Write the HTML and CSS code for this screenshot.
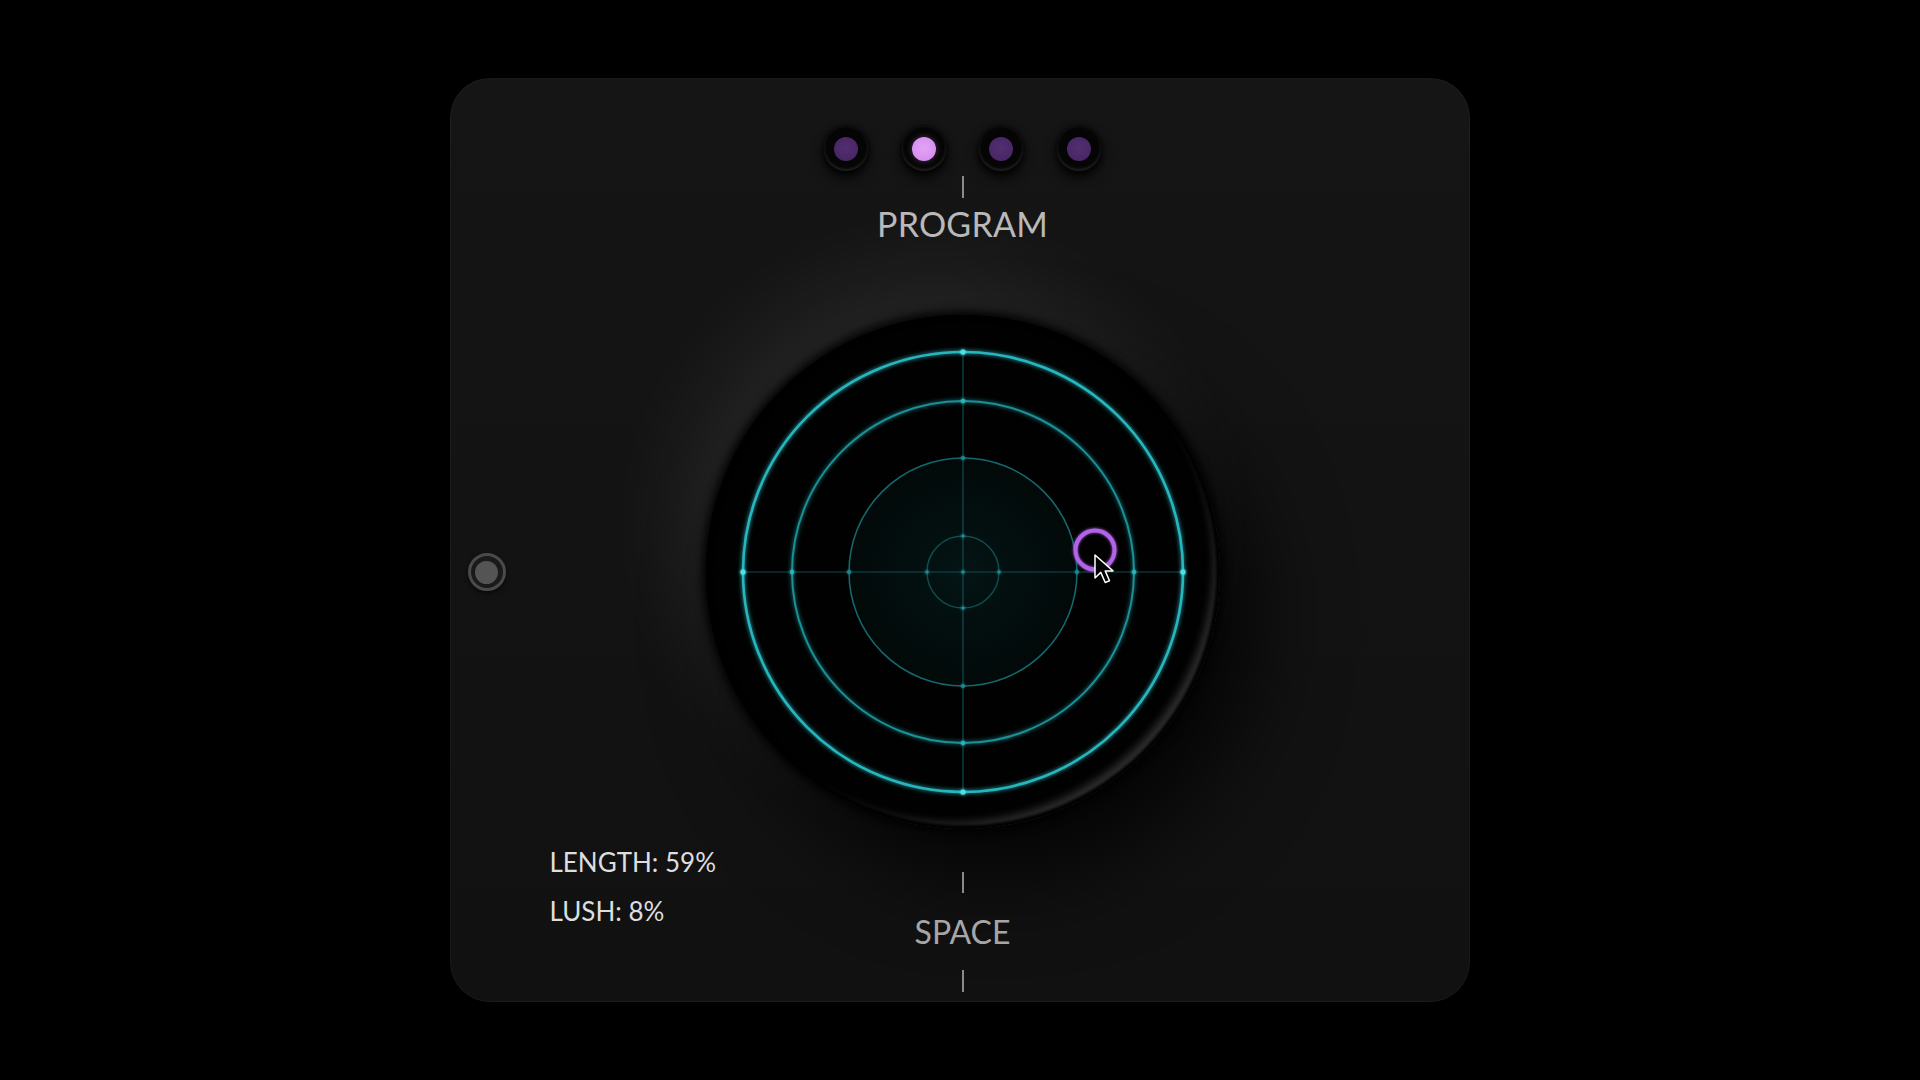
FILE: index.html
```html
<!DOCTYPE html>
<html lang="en">
<head>
<meta charset="utf-8">
<title>Space Reverb</title>
<link rel="stylesheet" href="styles.css">
</head>
<body>
<div class="panel">
  <div class="program">
    <div class="dots">
      <div class="socket"><div class="led"></div></div>
      <div class="socket"><div class="led led-on"></div></div>
      <div class="socket"><div class="led"></div></div>
      <div class="socket"><div class="led"></div></div>
    </div>
    <div class="tick"></div>
    <div class="label label-program">PROGRAM</div>
  </div>

  <div class="knob-row">
    <div class="bypass"><div class="bypass-core"></div></div>
    <div class="knob">
      <svg class="radar" viewBox="0 0 500 500" width="500" height="500">
        <defs>
          <radialGradient id="core" cx="50%" cy="50%" r="50%">
            <stop offset="0" class="core-a"/>
            <stop offset="1" class="core-b"/>
          </radialGradient>
          <filter id="glow" x="-20%" y="-20%" width="140%" height="140%">
            <feGaussianBlur stdDeviation="2.2" result="b"/>
            <feMerge><feMergeNode in="b"/><feMergeNode in="SourceGraphic"/></feMerge>
          </filter>
          <filter id="soft" x="-50%" y="-50%" width="200%" height="200%">
            <feGaussianBlur stdDeviation="1.5" result="b"/>
            <feMerge><feMergeNode in="b"/><feMergeNode in="SourceGraphic"/></feMerge>
          </filter>
        </defs>
        <circle class="core" cx="250" cy="250" r="114"/>
        <line class="cross" x1="30" y1="250" x2="470" y2="250"/>
        <line class="cross" x1="250" y1="30" x2="250" y2="470"/>
        <circle class="ring ring-4" cx="250" cy="250" r="36"/>
        <circle class="ring ring-3" cx="250" cy="250" r="114"/>
        <circle class="ring ring-2" cx="250" cy="250" r="171"/>
        <circle class="ring ring-1" cx="250" cy="250" r="220"/>
        <g class="nodes nodes-1">
          <circle cx="250" cy="30" r="2.6"/><circle cx="250" cy="470" r="2.6"/>
          <circle cx="30" cy="250" r="2.6"/><circle cx="470" cy="250" r="2.6"/>
        </g>
        <g class="nodes nodes-2">
          <circle cx="250" cy="79" r="2.2"/><circle cx="250" cy="421" r="2.2"/>
          <circle cx="79" cy="250" r="2.2"/><circle cx="421" cy="250" r="2.2"/>
        </g>
        <g class="nodes nodes-3">
          <circle cx="250" cy="136" r="2"/><circle cx="250" cy="364" r="2"/>
          <circle cx="136" cy="250" r="2"/><circle cx="364" cy="250" r="2"/>
          <circle cx="250" cy="214" r="1.8"/><circle cx="250" cy="286" r="1.8"/>
          <circle cx="214" cy="250" r="1.8"/><circle cx="286" cy="250" r="1.8"/>
          <circle cx="250" cy="250" r="1.8"/>
        </g>
        <circle class="handle" cx="382" cy="228" r="19.5"/>
        <path class="cursor" d="M382 233 L382 256 L387.8 250.4 L392.2 260.5 L396.5 258.8 L392.2 248.9 L400 248.9 Z"/>
      </svg>
    </div>
    <div class="spacer"></div>
  </div>

  <div class="bottom-row">
    <div class="readouts">
      <div class="readout">LENGTH: 59%</div>
      <div class="readout">LUSH: 8%</div>
    </div>
    <div class="space">
      <div class="tick tick-space"></div>
      <div class="label label-space">SPACE</div>
      <div class="tick tick-end"></div>
    </div>
    <div class="spacer"></div>
  </div>
</div>
</body>
</html>
```

FILE: styles.css
```css
html, body {
  margin: 0;
  padding: 0;
  background: #000;
}

body {
  width: 1920px;
  height: 1080px;
  display: flex;
  align-items: center;
  justify-content: center;
  font-family: "Lato", "Noto Sans", sans-serif;
}

.panel {
  box-sizing: border-box;
  width: 1020px;
  height: 924px;
  margin-left: -1px;
  border-radius: 40px;
  border: 1px solid rgba(255, 255, 255, 0.035);
  background: linear-gradient(180deg, #151515 0%, #131313 50%, #111111 100%);
  padding: 48px 0 0 6px;
  display: flex;
  flex-direction: column;
  overflow: hidden;
}

/* ---------- program selector ---------- */
.program {
  display: flex;
  flex-direction: column;
  align-items: center;
}

.dots {
  display: flex;
  gap: 33.5px;
  height: 44px;
}

.socket {
  width: 44px;
  height: 44px;
  border-radius: 50%;
  background: radial-gradient(circle at 50% 45%, #030303 0%, #050505 60%, #0b0b0b 100%);
  box-shadow:
    0 6px 12px rgba(0, 0, 0, 0.9),
    0 0 4px 1px rgba(0, 0, 0, 0.8),
    inset 0 -2px 3px rgba(255, 255, 255, 0.1),
    0 0 0 1px rgba(255, 255, 255, 0.045);
  display: flex;
  align-items: center;
  justify-content: center;
}

.led {
  width: 24px;
  height: 24px;
  border-radius: 50%;
  background: radial-gradient(circle at 50% 45%, #52306f 0%, #492766 70%, #3e2058 100%);
}

.led-on {
  background: radial-gradient(circle at 50% 45%, #e3a3f6 0%, #d690ee 70%, #c97fe2 100%);
  box-shadow: 0 0 6px rgba(214, 144, 238, 0.35);
}

.tick {
  width: 2px;
  height: 22px;
  background: #8a8a8a;
  margin-top: 5px;
}

.label {
  line-height: 1;
  color: #b9b9b9;
}

.label-program {
  font-size: 34px;
  margin-top: 9px;
  letter-spacing: 0.2px;
}

/* ---------- knob ---------- */
.knob-row {
  display: grid;
  grid-template-columns: minmax(0, 1fr) 514px minmax(0, 1fr);
  align-items: center;
  margin-top: 74px;
}

.bypass {
  justify-self: start;
  margin-left: 11px;
  box-sizing: border-box;
  width: 38px;
  height: 38px;
  border-radius: 50%;
  border: 3px solid #4a4a4a;
  background: #1a1a1a;
  display: flex;
  align-items: center;
  justify-content: center;
  box-shadow: 0 2px 4px rgba(0, 0, 0, 0.6);
}

.bypass-core {
  width: 23px;
  height: 23px;
  border-radius: 50%;
  background: #545454;
}

.knob {
  width: 514px;
  height: 514px;
  border-radius: 50%;
  background: #010101;
  display: flex;
  align-items: center;
  justify-content: center;
  box-shadow:
    inset 0 0 3px 4px #010101,
    inset -11px -11px 10px -5px rgba(255, 255, 255, 0.2),
    0 0 8px 4px rgba(0, 0, 0, 0.9),
    -30px -45px 90px rgba(255, 255, 255, 0.075),
    35px 45px 90px rgba(0, 0, 0, 0.8);
}

.radar {
  display: block;
}

.core-a { stop-color: #041414; }
.core-b { stop-color: #020909; }

.core { fill: url(#core); }

.cross {
  stroke: #0d4f52;
  stroke-width: 1.2;
}

.ring { fill: none; }
.ring-1 { stroke: #28b6be; stroke-width: 2.6; filter: url(#glow); }
.ring-2 { stroke: #1a9097; stroke-width: 2; filter: url(#glow); }
.ring-3 { stroke: #14676c; stroke-width: 1.6; }
.ring-4 { stroke: #0f4d50; stroke-width: 1.5; }

.nodes circle { filter: url(#soft); }
.nodes-1 { fill: #4fe0e6; }
.nodes-2 { fill: #2cb2b8; }
.nodes-3 { fill: #1f8a8f; }

.handle {
  fill: none;
  stroke: #b264e8;
  stroke-width: 4;
  filter: url(#soft);
}

.cursor {
  fill: #000;
  stroke: #fff;
  stroke-width: 1.5;
  stroke-linejoin: round;
}

/* ---------- bottom ---------- */
.bottom-row {
  display: grid;
  grid-template-columns: minmax(0, 1fr) 500px minmax(0, 1fr);
  align-items: start;
}

.readouts {
  padding: 9px 0 0 93px;
}

.readout {
  font-size: 26px;
  line-height: 49px;
  color: #dedede;
  white-space: nowrap;
}

.space {
  display: flex;
  flex-direction: column;
  align-items: center;
  padding-top: 43px;
}

.tick-space {
  margin-top: 0;
  height: 21px;
}

.label-space {
  font-size: 32px;
  margin-top: 23px;
  color: #a6a6a6;
}

.tick-end {
  margin-top: 22px;
  height: 22px;
}
```
